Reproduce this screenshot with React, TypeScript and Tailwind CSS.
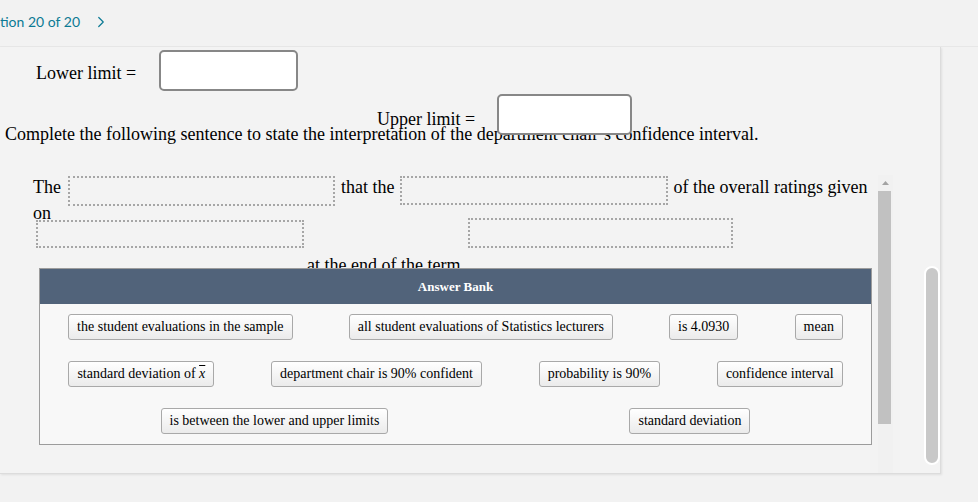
import { ChevronRight } from 'lucide-react'

const serif = { fontFamily: '"Liberation Serif", "Times New Roman", serif' }

function Chip({ children }: { children: React.ReactNode }) {
  return (
    <div className="h-[26px] px-[8px] flex items-center border border-[#a9a9a9] rounded-[3px] bg-linear-to-b from-white to-[#ebebeb] text-[14px] text-black whitespace-nowrap">
      {children}
    </div>
  )
}

function DropBox({ w, h }: { w: string; h: string }) {
  return <div className={`${w} ${h} border-2 border-dotted border-[#a6a6a6] shrink-0`} />
}

export default function App() {
  return (
    <div className="w-[978px] h-[502px] bg-[#f2f2f2] overflow-hidden text-black" style={serif}>
      {/* top nav */}
      <div
        className="h-[47px] flex items-center border-b border-[#e7e7e7] text-[14px] text-[#0b7a94]"
        style={{ fontFamily: 'Lato, "Open Sans", sans-serif' }}
      >
        <span className="-mt-[3px]">tion 20 of 20</span>
        <ChevronRight className="w-[18px] h-[18px] ml-[12px] -mt-[3px]" strokeWidth={1.6} />
      </div>

      {/* main panel */}
      <div className="w-[941px] h-[427px] bg-[#f3f3f3] border-r border-b border-[#dcdcdc] shadow-[1px_1px_2px_rgba(0,0,0,0.08)] flex">
        <div className="w-[924px] flex flex-col">
          {/* limits */}
          <div className="h-[128px] text-[18px] leading-[20px]">
            <div className="flex items-start h-[41px] mt-[3px] pl-[36px]">
              <span className="mt-[13px]">Lower limit =</span>
              <div className="ml-[23px] w-[139px] h-[41px] bg-white border-2 border-[#878787] rounded-[5px]" />
            </div>
            <div className="flex items-start h-[30px] mt-[3px] pl-[377px]">
              <span className="mt-[15px]">Upper limit =</span>
              <div className="relative z-10 ml-[22px] w-[135px] h-[41px] bg-white border-2 border-[#878787] rounded-[5px]" />
            </div>
            <div className="pl-[5px]">
              Complete the following sentence to state the interpretation of the department chair’s confidence interval.
            </div>
          </div>

          {/* scroll area */}
          <div className="flex flex-1 min-h-0">
            <div className="w-[878px] text-[18px] leading-[20px]">
              <div className="flex items-start h-[30px] mt-[1px] pl-[33px]">
                <span className="mt-[1px]">The</span>
                <div className="ml-[7px]"><DropBox w="w-[267px]" h="h-[30px]" /></div>
                <span className="mt-[1px] ml-[6px]">that the</span>
                <div className="ml-[6px]"><DropBox w="w-[268px]" h="h-[29px]" /></div>
                <span className="mt-[1px] ml-[5px]">of the overall ratings given</span>
              </div>
              <div className="h-[14px] -mt-[3px] pl-[33px]">on</div>
              <div className="flex items-end h-[31px]">
                <div className="ml-[36px]"><DropBox w="w-[268px]" h="h-[28px]" /></div>
                <div className="ml-[164px]"><DropBox w="w-[265px]" h="h-[30px]" /></div>
              </div>
              <div className="h-[13px] mt-[7px] pl-[307px] whitespace-nowrap">at the end of the term</div>

              {/* answer bank */}
              <div className="relative ml-[39px] w-[833px] border border-[#9c9c9c] bg-[#f8f8f8]">
                <div className="h-[35px] bg-[#51637a] flex items-center justify-center text-white text-[13px] font-bold">
                  Answer Bank
                </div>
                <div className="pt-[10px] pb-[10px] flex flex-col gap-[21px]">
                  <div className="flex justify-around">
                    <Chip>the student evaluations in the sample</Chip>
                    <Chip>all student evaluations of Statistics lecturers</Chip>
                    <Chip>is 4.0930</Chip>
                    <Chip>mean</Chip>
                  </div>
                  <div className="flex justify-around">
                    <Chip>
                      standard deviation of&nbsp;<span className="italic overline">x</span>
                    </Chip>
                    <Chip>department chair is 90% confident</Chip>
                    <Chip>probability is 90%</Chip>
                    <Chip>confidence interval</Chip>
                  </div>
                  <div className="flex justify-around">
                    <Chip>is between the lower and upper limits</Chip>
                    <Chip>standard deviation</Chip>
                  </div>
                </div>
              </div>
            </div>

            {/* inner scrollbar */}
            <div className="w-[15px] flex flex-col bg-[#f1f1f1]">
              <div className="h-[16px] flex items-center justify-center">
                <svg width="7" height="4" viewBox="0 0 7 4">
                  <path d="M0 4 L3.5 0 L7 4 Z" fill="#a3a3a3" />
                </svg>
              </div>
              <div className="w-[13px] h-[233px] bg-[#c1c1c1]" />
            </div>
          </div>
        </div>

        {/* outer scrollbar */}
        <div className="w-[16px] pt-[219px]">
          <div className="w-[16px] h-[199px] rounded-full bg-[#c8c8c8] border-2 border-white" />
        </div>
      </div>
    </div>
  )
}
